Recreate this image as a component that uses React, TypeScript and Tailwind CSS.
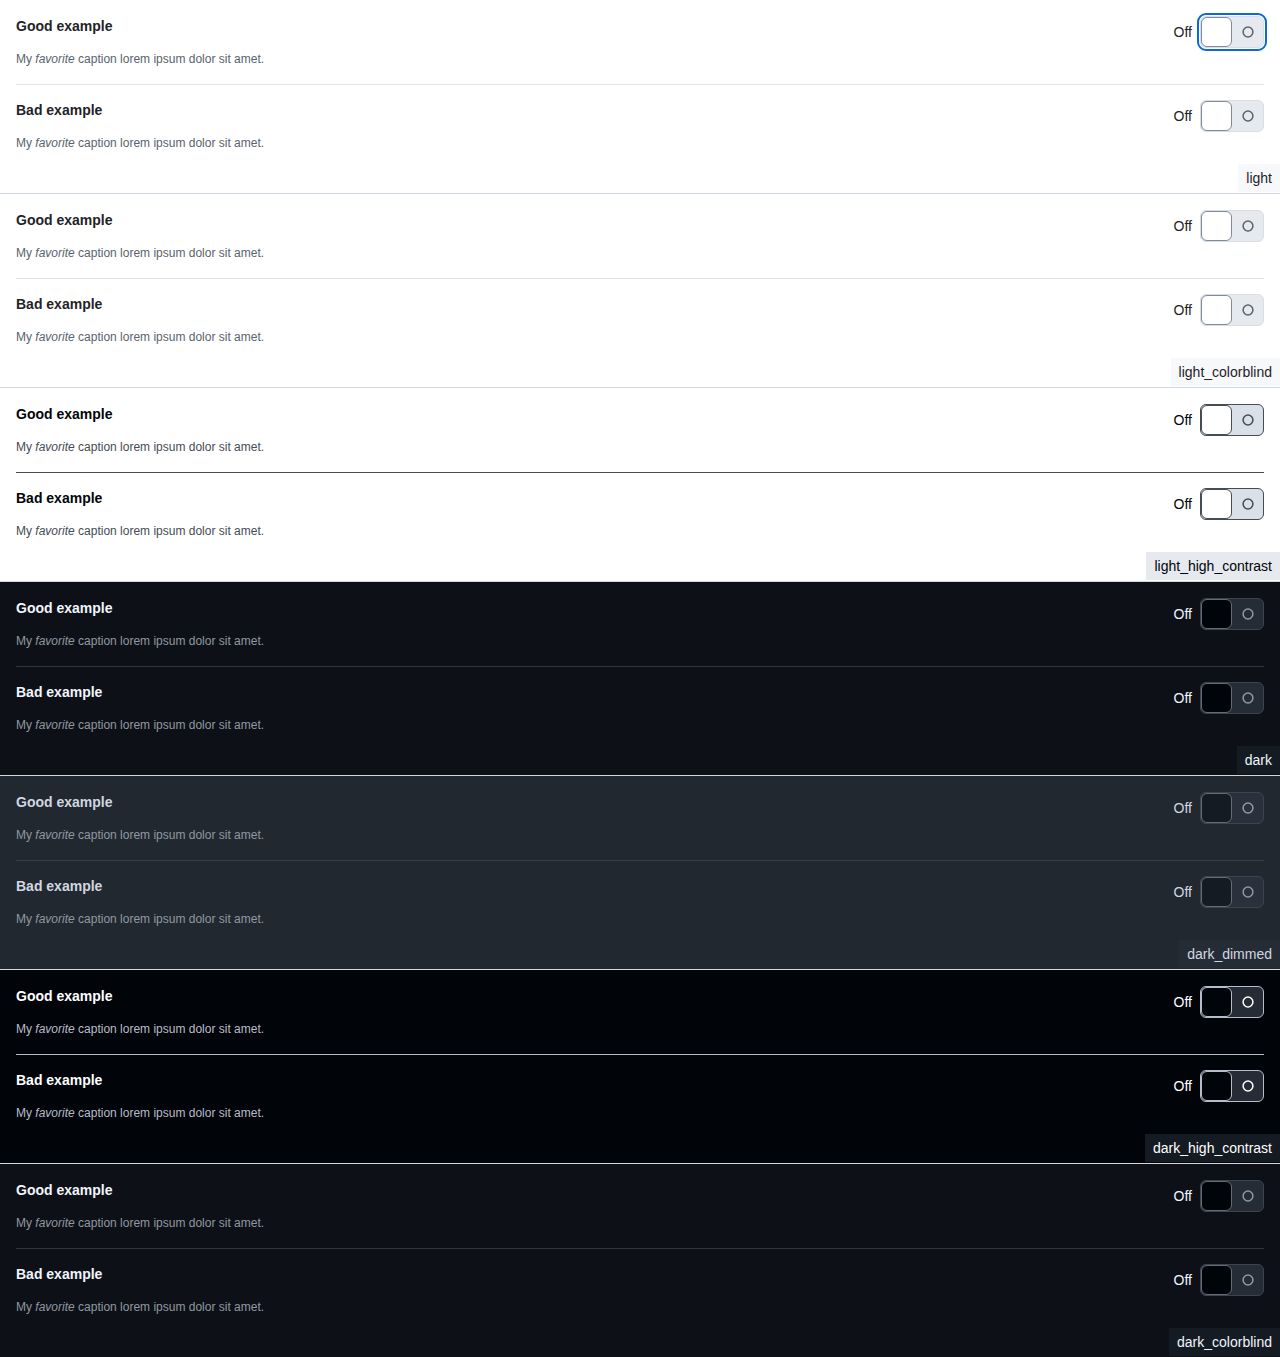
import React from 'react';

type Theme = {
  name: string;
  bg: string;
  fg: string;
  muted: string;
  divider: string;
  track: string;
  knob: string;
  icon: string;
  tag: string;
};

const themes: Theme[] = [
  {
    name: 'light',
    bg: 'bg-white',
    fg: 'text-[#1f2328]',
    muted: 'text-[#59636e]',
    divider: 'border-[#dde3e9]',
    track: 'bg-[#e6eaef] border-[#d8dee4]',
    knob: 'bg-white border-[#818b98]',
    icon: 'text-[#59636e]',
    tag: 'bg-[#f6f8fa] text-[#1f2328]',
  },
  {
    name: 'light_colorblind',
    bg: 'bg-white',
    fg: 'text-[#1f2328]',
    muted: 'text-[#59636e]',
    divider: 'border-[#dde3e9]',
    track: 'bg-[#e6eaef] border-[#d8dee4]',
    knob: 'bg-white border-[#818b98]',
    icon: 'text-[#59636e]',
    tag: 'bg-[#f6f8fa] text-[#1f2328]',
  },
  {
    name: 'light_high_contrast',
    bg: 'bg-white',
    fg: 'text-[#010409]',
    muted: 'text-[#454c54]',
    divider: 'border-[#454c54]',
    track: 'bg-[#dae0e7] border-[#454c54]',
    knob: 'bg-white border-[#454c54]',
    icon: 'text-[#454c54]',
    tag: 'bg-[#e6eaef] text-[#010409]',
  },
  {
    name: 'dark',
    bg: 'bg-[#0d1117]',
    fg: 'text-[#f0f6fc]',
    muted: 'text-[#9198a1]',
    divider: 'border-[#2f353d]',
    track: 'bg-[#262c36] border-[#3d444d]',
    knob: 'bg-[#010409] border-[#656c76]',
    icon: 'text-[#9198a1]',
    tag: 'bg-[#151b23] text-[#f0f6fc]',
  },
  {
    name: 'dark_dimmed',
    bg: 'bg-[#212830]',
    fg: 'text-[#d1d7e0]',
    muted: 'text-[#9198a1]',
    divider: 'border-[#363d47]',
    track: 'bg-[#2a313c] border-[#3d444d]',
    knob: 'bg-[#151b23] border-[#656c76]',
    icon: 'text-[#9198a1]',
    tag: 'bg-[#262c36] text-[#d1d7e0]',
  },
  {
    name: 'dark_high_contrast',
    bg: 'bg-[#010409]',
    fg: 'text-white',
    muted: 'text-[#b7bdc8]',
    divider: 'border-[#b7bdc8]',
    track: 'bg-[#262c36] border-[#b7bdc8]',
    knob: 'bg-[#010409] border-[#b7bdc8]',
    icon: 'text-white',
    tag: 'bg-[#151b23] text-white',
  },
  {
    name: 'dark_colorblind',
    bg: 'bg-[#0d1117]',
    fg: 'text-[#f0f6fc]',
    muted: 'text-[#9198a1]',
    divider: 'border-[#2f353d]',
    track: 'bg-[#262c36] border-[#3d444d]',
    knob: 'bg-[#010409] border-[#656c76]',
    icon: 'text-[#9198a1]',
    tag: 'bg-[#151b23] text-[#f0f6fc]',
  },
];

function Toggle({ t, focused }: { t: Theme; focused?: boolean }) {
  return (
    <div className="flex items-center gap-2">
      <span className={`text-sm leading-5 ${t.fg}`}>Off</span>
      <div
        className={`flex w-16 h-8 rounded-md border ${t.track} ${
          focused ? 'outline-2 outline-offset-1 outline-[#0969da]' : ''
        }`}
      >
        <div className={`w-1/2 h-full rounded-md border ${t.knob}`} />
        <div className={`flex-1 flex items-center justify-center ${t.icon}`}>
          <svg width="14" height="14" viewBox="0 0 14 14" fill="none">
            <circle cx="7" cy="7" r="4.9" stroke="currentColor" strokeWidth="1.5" />
          </svg>
        </div>
      </div>
    </div>
  );
}

function Row({ t, label, focused, first }: { t: Theme; label: string; focused?: boolean; first?: boolean }) {
  return (
    <div className={`flex items-start justify-between ${first ? `pt-4 pb-4 border-b ${t.divider}` : 'pt-[15px] pb-3'}`}>
      <div>
        <div className={`text-sm leading-5 font-bold ${t.fg}`}>{label}</div>
        <div className={`mt-[14px] text-xs leading-[18px] ${t.muted}`}>
          My <i>favorite</i> caption lorem ipsum dolor sit amet.
        </div>
      </div>
      <Toggle t={t} focused={focused} />
    </div>
  );
}

export default function App() {
  return (
    <div className="font-['Liberation_Sans',Arial,sans-serif]">
      {themes.map((t, i) => (
        <section key={t.name} className={`flex flex-col border-b border-[#d1d9e0] ${t.bg}`}>
          <div className="px-4">
            <Row t={t} label="Good example" focused={i === 0} first />
            <Row t={t} label="Bad example" />
          </div>
          <div className={`self-end mb-px px-2 py-1 text-sm leading-5 ${t.tag}`}>{t.name}</div>
        </section>
      ))}
    </div>
  );
}
